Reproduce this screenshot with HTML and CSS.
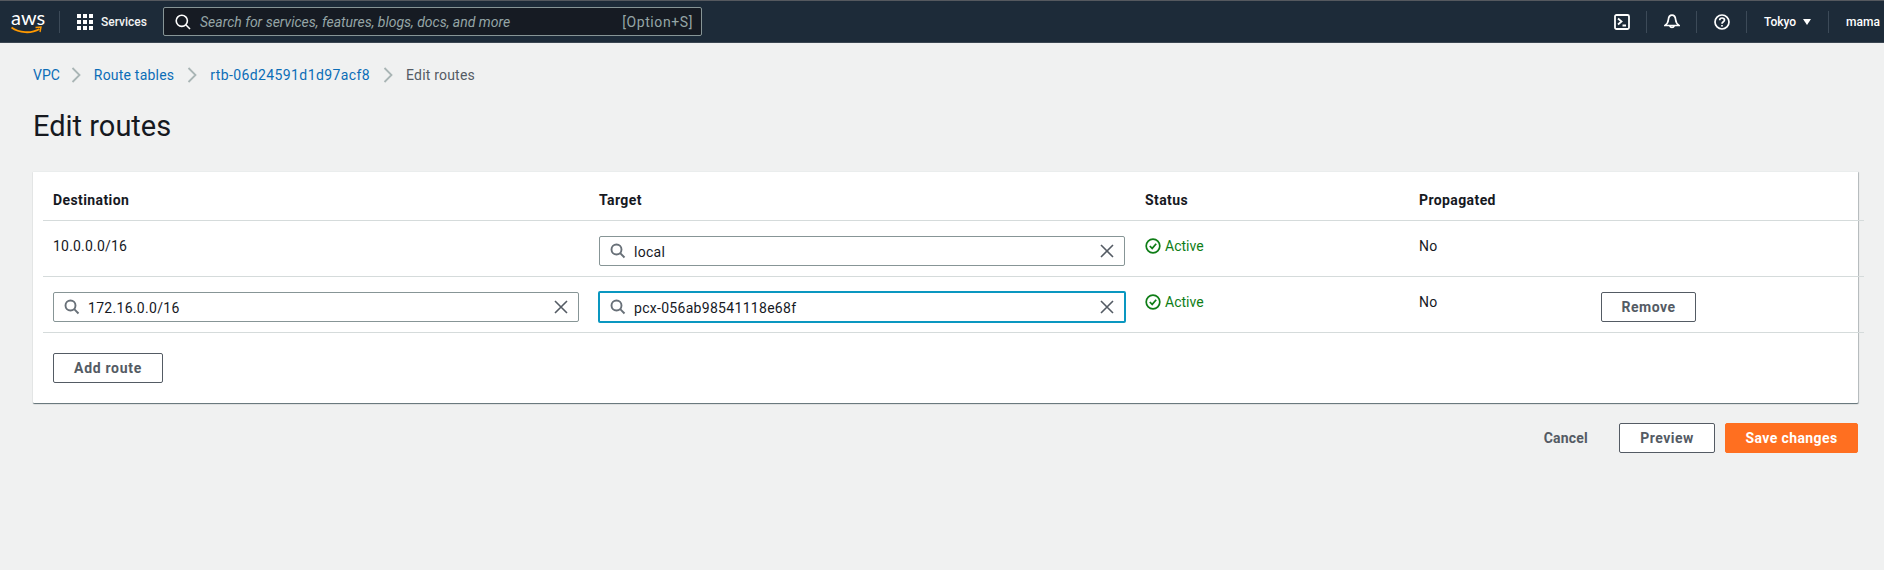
FILE: index.html
```html
<!DOCTYPE html>
<html lang="en">
<head>
<meta charset="utf-8">
<title>Edit routes</title>
<link rel="stylesheet" href="styles.css">
</head>
<body>
<header class="nav">
  <div class="logo"><span class="logo-text">aws</span>
    <svg class="logo-smile" width="32" height="9" viewBox="0 0 32 9"><path d="M0.500 1.500C8 7 20 8 28.500 3" fill="none" stroke="#f90" stroke-width="1.800"/><path d="M24.500 1.500 30 1 29 6" fill="none" stroke="#f90" stroke-width="1.400"/></svg>
  </div>
  <span class="nav-sep sep-logo"></span>
  <svg class="grid-icon" width="16" height="16" viewBox="0 0 16 16" fill="#fff"><rect width="4" height="4"/><rect x="6" width="4" height="4"/><rect x="12" width="4" height="4"/><rect y="6" width="4" height="4"/><rect x="6" y="6" width="4" height="4"/><rect x="12" y="6" width="4" height="4"/><rect y="12" width="4" height="4"/><rect x="6" y="12" width="4" height="4"/><rect x="12" y="12" width="4" height="4"/></svg>
  <span class="services">Services</span>
  <div class="nav-search">
    <svg class="search-white" width="16" height="16" viewBox="0 0 16 16" fill="none" stroke="#fff" stroke-width="1.600"><circle cx="6.800" cy="6.800" r="5.600"/><path d="M10.800 10.800 15 15"/></svg>
    <span class="placeholder">Search for services, features, blogs, docs, and more</span>
    <span class="shortcut">[Option+S]</span>
  </div>
  <div class="nav-right">
    <svg class="nav-icon" width="16" height="16" viewBox="0 0 16 16" fill="none" stroke="#fff" stroke-width="1.800"><rect x="1" y="1" width="14" height="14" rx="1.500"/><path d="M4 4.500 7.500 7.500 4 10.500M8.500 11.500H12"/></svg>
    <span class="nav-sep"></span>
    <svg class="nav-icon" width="16" height="16" viewBox="0 0 16 16" fill="none" stroke="#fff" stroke-width="1.700"><path d="M8 1.200C5.500 1.200 4.600 3.400 4.400 5.500 4.200 8 3.400 9.800 1 11.500H15C12.600 9.800 11.800 8 11.600 5.500 11.400 3.400 10.500 1.200 8 1.200Z"/><path d="M5.800 11.800A2.300 2.300 0 0 0 10.200 11.800"/></svg>
    <span class="nav-sep"></span>
    <svg class="nav-icon" width="16" height="16" viewBox="0 0 16 16" fill="none" stroke="#fff" stroke-width="1.700"><circle cx="8" cy="8" r="7"/><path d="M5.700 6.300C5.700 3.300 10.500 3.300 10.500 6.100 10.500 7.800 8 7.800 8 9.800"/><path d="M8 11V12.600"/></svg>
    <span class="nav-sep"></span>
    <span class="region">Tokyo</span>
    <svg class="caret" width="8" height="6" viewBox="0 0 8 6" fill="#fff"><path d="M0 0H8L4 6Z"/></svg>
    <span class="nav-sep"></span>
    <span class="user">mama</span>
  </div>
</header>

<main class="main">
  <nav class="crumbs">
    <a class="crumb-link crumb-root">VPC</a>
    <svg class="chev" width="10" height="16" viewBox="0 0 10 16" fill="none" stroke="#a9b5b5" stroke-width="1.800"><path d="M1.500 1 8.500 8 1.500 15"/></svg>
    <a class="crumb-link">Route tables</a>
    <svg class="chev" width="10" height="16" viewBox="0 0 10 16" fill="none" stroke="#a9b5b5" stroke-width="1.800"><path d="M1.500 1 8.500 8 1.500 15"/></svg>
    <a class="crumb-link crumb-id">rtb-06d24591d1d97acf8</a>
    <svg class="chev" width="10" height="16" viewBox="0 0 10 16" fill="none" stroke="#a9b5b5" stroke-width="1.800"><path d="M1.500 1 8.500 8 1.500 15"/></svg>
    <span class="crumb-current">Edit routes</span>
  </nav>
  <h1 class="title">Edit routes</h1>

  <section class="card">
    <div class="row row-head">
      <div>Destination</div>
      <div>Target</div>
      <div>Status</div>
      <div>Propagated</div>
      <div></div>
    </div>
    <div class="row">
      <div>10.0.0.0/16</div>
      <div>
        <div class="field">
          <svg class="field-search" width="16" height="16" viewBox="0 0 16 16" fill="none" stroke="#687078" stroke-width="1.900"><circle cx="6.500" cy="6.500" r="5"/><path d="M10.200 10.200 14.500 14.500"/></svg>
          <span class="field-value">local</span>
          <svg class="field-clear" width="14" height="14" viewBox="0 0 14 14" fill="none" stroke="#545b64" stroke-width="1.600"><path d="M1 1 13 13M13 1 1 13"/></svg>
        </div>
      </div>
      <div class="status">
        <svg width="16" height="16" viewBox="0 0 16 16" fill="none" stroke="#0e7d16" stroke-width="1.700"><circle cx="8" cy="8" r="6.800"/><path d="M4.800 8 7.200 10.400 11.200 5.800"/></svg>
        <span>Active</span>
      </div>
      <div>No</div>
      <div></div>
    </div>
    <div class="row">
      <div>
        <div class="field">
          <svg class="field-search" width="16" height="16" viewBox="0 0 16 16" fill="none" stroke="#687078" stroke-width="1.900"><circle cx="6.500" cy="6.500" r="5"/><path d="M10.200 10.200 14.500 14.500"/></svg>
          <span class="field-value">172.16.0.0/16</span>
          <svg class="field-clear" width="14" height="14" viewBox="0 0 14 14" fill="none" stroke="#545b64" stroke-width="1.600"><path d="M1 1 13 13M13 1 1 13"/></svg>
        </div>
      </div>
      <div>
        <div class="field field-focus">
          <svg class="field-search" width="16" height="16" viewBox="0 0 16 16" fill="none" stroke="#687078" stroke-width="1.900"><circle cx="6.500" cy="6.500" r="5"/><path d="M10.200 10.200 14.500 14.500"/></svg>
          <span class="field-value">pcx-056ab98541118e68f</span>
          <svg class="field-clear" width="14" height="14" viewBox="0 0 14 14" fill="none" stroke="#545b64" stroke-width="1.600"><path d="M1 1 13 13M13 1 1 13"/></svg>
        </div>
      </div>
      <div class="status">
        <svg width="16" height="16" viewBox="0 0 16 16" fill="none" stroke="#0e7d16" stroke-width="1.700"><circle cx="8" cy="8" r="6.800"/><path d="M4.800 8 7.200 10.400 11.200 5.800"/></svg>
        <span>Active</span>
      </div>
      <div>No</div>
      <div><button class="btn btn-remove">Remove</button></div>
    </div>
    <div class="card-foot">
      <button class="btn btn-add">Add route</button>
    </div>
  </section>

  <div class="actions">
    <button class="btn-link">Cancel</button>
    <button class="btn btn-preview">Preview</button>
    <button class="btn btn-primary">Save changes</button>
  </div>
</main>
</body>
</html>
```

FILE: styles.css
```css
* { box-sizing: border-box; }
html, body { margin: 0; padding: 0; }
body {
  height: 570px;
  background: #f0f1f1;
  color: #16191f;
  font-family: Roboto, "Liberation Sans", sans-serif;
  font-size: 14px;
  line-height: 20px;
  overflow: hidden;
}

/* top navigation */
.nav {
  display: flex;
  align-items: center;
  height: 43px;
  padding-left: 11px;
  background: #1d2b39;
  border-top: 1px solid #55595f;
  border-bottom: 1px solid #3b4652;
  color: #fff;
}
.logo { position: relative; width: 32px; height: 29px; }
.logo-text {
  display: block;
  font-family: Lato, sans-serif;
  font-size: 20px;
  line-height: 20px;
  text-align: center;
}
.logo-smile { position: absolute; left: 0; top: 19px; }
.nav-sep { width: 1px; height: 22px; background: #3c4a58; flex: none; }
.sep-logo { margin-left: 16px; margin-right: 17px; }
.grid-icon { flex: none; }
.services { margin-left: 8px; width: 62px; font-size: 12px; font-weight: 500; color: #f2f3f3; }
.nav-search {
  display: flex;
  align-items: center;
  width: 539px;
  height: 29px;
  padding: 0 8px 0 11px;
  background: #161b23;
  border: 1px solid #879596;
  border-radius: 2px;
}
.search-white { flex: none; }
.placeholder { margin-left: 9px; flex: 1; color: #95a5a6; font-style: italic; font-size: 14px; }
.shortcut { color: #95a5a6; font-size: 14px; letter-spacing: 0.6px; }
.nav-right { display: flex; align-items: center; margin-left: auto; font-size: 12px; font-weight: 500; }
.nav-right .nav-sep { margin: 0 17px 0 16px; }
.caret { margin-left: 7px; margin-right: 1px; }
.region { width: 32px; }
.user { width: 38px; }

/* page */
.main { padding: 0 26px 0 33px; }
.crumbs { display: flex; align-items: center; height: 20px; margin-top: 22px; gap: 13px; letter-spacing: 0.2px; }
.crumb-link { color: #0b6db7; }
.crumb-root { margin-right: -2px; letter-spacing: 0; }
.crumb-id { letter-spacing: 0.4px; }
.crumb-current { color: #545b64; }
.chev { flex: none; }
.title { margin: 23px 0 0; font-size: 29px; line-height: 36px; font-weight: 400; }

/* card */
.card {
  margin-top: 27px;
  height: 232px;
  background: #fff;
  border-top: 1px solid #eaeded;
  box-shadow: 0 1px 1px 0 rgba(0, 28, 36, .5), 1px 1px 1px 0 rgba(0, 28, 36, .22);
  border-radius: 1px;
}
.row {
  display: grid;
  grid-template-columns: 546px 546px 274px 182px 1fr;
  height: 56px;
  margin: 0 -6px 0 10px;
  padding: 15px 0 0 10px;
  border-bottom: 1px solid #d5dbdb;
  letter-spacing: 0.2px;
}
.row-head { height: 49px; padding-top: 18px; font-weight: 700; letter-spacing: 0.4px; }
.status { display: flex; align-items: flex-start; gap: 4px; color: #0e7d16; letter-spacing: 0; }
.status svg { margin-top: 2px; flex: none; }

.field {
  display: flex;
  align-items: center;
  width: 526px;
  height: 30px;
  padding: 0 10px;
  background: #fff;
  border: 1px solid #879596;
  border-radius: 2px;
}
.field-focus {
  width: 528px;
  height: 32px;
  margin: -1px 0 -1px -1px;
  padding: 0 10px;
  border: 2px solid #0a97c0;
}
.field-search { flex: none; }
.field-value { flex: 1; margin-left: 8px; padding-top: 1px; letter-spacing: 0.3px; }
.field-clear { flex: none; }

/* buttons */
.btn {
  display: block;
  height: 30px;
  padding: 0;
  background: #fff;
  border: 1px solid #545b64;
  border-radius: 2px;
  color: #545b64;
  font: 700 14px/20px Roboto, "Liberation Sans", sans-serif;
  letter-spacing: 0.5px;
}
.btn-remove { width: 95px; }
.card-foot { padding: 20px 0 0 20px; }
.btn-add { width: 110px; letter-spacing: 0.7px; }

.actions { display: flex; justify-content: flex-end; align-items: center; margin-top: 20px; }
.btn-link {
  padding: 0;
  margin-right: 31px;
  border: 0;
  background: none;
  color: #545b64;
  font: 700 14px/20px Roboto, "Liberation Sans", sans-serif;
  letter-spacing: 0.2px;
}
.btn-preview { width: 96px; margin-right: 10px; }
.btn-primary { width: 133px; background: #ff6f20; border-color: #ff6f20; color: #fff; letter-spacing: 0.4px; }
```
